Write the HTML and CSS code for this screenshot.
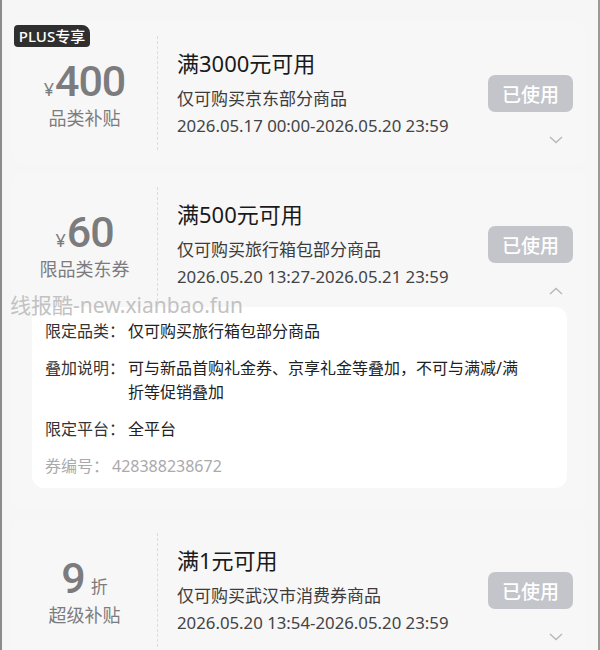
FILE: index.html
```html
<!DOCTYPE html>
<html>
<head>
    <meta name="viewport" content="width=device-width, initial-scale=1" />
    <title>优惠券</title>
    <link rel="stylesheet" href="styles.css">
</head>

<body>

<div class="page">

    <div class="card">
        <span class="plus-badge">PLUS专享</span>
        <div class="card-main">
            <div class="amount">
                <div class="value"><span class="unit">¥</span><span class="num">400</span></div>
                <div class="kind">品类补贴</div>
            </div>
            <div class="info">
                <div class="title">满3000元可用</div>
                <div class="scope">仅可购买京东部分商品</div>
                <div class="period">2026.05.17 00:00-2026.05.20 23:59</div>
            </div>
            <div class="side">
                <button class="used-button">已使用</button>
                <svg class="chevron" width="14" height="8" viewBox="0 0 14 8"><path d="M1 1l6 5.5L13 1" fill="none" stroke="#b8b8b8" stroke-width="1.4"/></svg>
            </div>
        </div>
    </div>

    <div class="card">
        <div class="card-main">
            <div class="amount">
                <div class="value"><span class="unit">¥</span><span class="num">60</span></div>
                <div class="kind">限品类东券</div>
            </div>
            <div class="info">
                <div class="title">满500元可用</div>
                <div class="scope">仅可购买旅行箱包部分商品</div>
                <div class="period">2026.05.20 13:27-2026.05.21 23:59</div>
            </div>
            <div class="side">
                <button class="used-button">已使用</button>
                <svg class="chevron" width="14" height="8" viewBox="0 0 14 8"><path d="M1 7l6-5.5L13 7" fill="none" stroke="#b8b8b8" stroke-width="1.4"/></svg>
            </div>
        </div>
        <div class="details">
            <div class="row"><span class="label">限定品类：</span><span class="text">仅可购买旅行箱包部分商品</span></div>
            <div class="row"><span class="label">叠加说明：</span><span class="text">可与新品首购礼金券、京享礼金等叠加，不可与满减/满折等促销叠加</span></div>
            <div class="row"><span class="label">限定平台：</span><span class="text">全平台</span></div>
            <div class="row muted"><span class="label">券编号：</span><span class="text">428388238672</span></div>
        </div>
        <div class="watermark">线报酷-new.xianbao.fun</div>
    </div>

    <div class="card">
        <div class="card-main">
            <div class="amount">
                <div class="value"><span class="num">9</span><span class="zhe">折</span></div>
                <div class="kind">超级补贴</div>
            </div>
            <div class="info">
                <div class="title">满1元可用</div>
                <div class="scope">仅可购买武汉市消费券商品</div>
                <div class="period">2026.05.20 13:54-2026.05.20 23:59</div>
            </div>
            <div class="side">
                <button class="used-button">已使用</button>
                <svg class="chevron" width="14" height="8" viewBox="0 0 14 8"><path d="M1 1l6 5.5L13 1" fill="none" stroke="#b8b8b8" stroke-width="1.4"/></svg>
            </div>
        </div>
    </div>

</div>

</body>
</html>
```

FILE: styles.css
```css
body {
    margin: 0;
    padding: 0;
    background-color: #f6f6f6;
    font-family: "Noto Sans", "Noto Sans CJK SC", sans-serif;
    color: #222222;
}

.page {
    box-sizing: border-box;
    width: 600px;
    height: 650px;
    overflow: hidden;
    border-left: 2px solid #8c8c8c;
    border-right: 2px solid #9a9a9a;
    padding: 22px 12px 0 10px;
}

.card {
    position: relative;
    background-color: #f7f7f7;
    border-radius: 10px;
    padding: 14px 0;
    margin-bottom: 9px;
}

.plus-badge {
    position: absolute;
    top: 3px;
    left: 2px;
    width: 76px;
    height: 22px;
    line-height: 22px;
    text-align: center;
    background-color: #2f2f2f;
    color: #ffffff;
    font-size: 15px;
    font-weight: 500;
    border-radius: 4px 8px 4px 4px;
}

.card-main {
    display: flex;
    height: 114px;
}

.amount {
    width: 145px;
    border-right: 1px dashed #dcdcdc;
    display: flex;
    flex-direction: column;
    align-items: center;
    justify-content: center;
    color: #7c7c7e;
}

.value {
    display: flex;
    align-items: baseline;
    height: 46px;
    margin-top: 2px;
}

.unit {
    font-size: 18px;
    margin-right: 1px;
}

.num {
    font-family: Roboto, "Noto Sans", sans-serif;
    font-size: 43px;
    font-weight: 500;
    letter-spacing: -1px;
    line-height: 46px;
}

.zhe {
    font-size: 17px;
    margin-left: 6px;
}

.kind {
    font-size: 18px;
    line-height: 26px;
    margin-top: 1px;
}

.info {
    flex: 1;
    padding: 12px 0 0 19px;
}

.title {
    font-size: 22px;
    line-height: 30px;
    color: #1a1a1a;
}

.scope {
    font-size: 17px;
    line-height: 30px;
    margin-top: 6px;
    color: #3c3c3c;
}

.period {
    font-size: 16.8px;
    line-height: 24px;
    color: #444444;
}

.side {
    width: 85px;
    margin-right: 13px;
    padding-top: 39px;
    display: flex;
    flex-direction: column;
    align-items: center;
}

.used-button {
    width: 85px;
    height: 37px;
    border: none;
    border-radius: 7px;
    background-color: #c3c5ca;
    color: #ffffff;
    font-family: "Noto Sans CJK SC", sans-serif;
    font-size: 19px;
    font-weight: 500;
    padding: 0;
}

.chevron {
    align-self: flex-end;
    margin: 24px 10px 0 0;
}

.details {
    margin: 6px 19px 8px 20px;
    background-color: #ffffff;
    border-radius: 12px;
    padding: 12px 13px 10px;
}

.row {
    display: flex;
    font-size: 16px;
    line-height: 24px;
    margin-bottom: 13px;
    color: #222222;
}

.row:last-child {
    margin-bottom: 0;
}

.label {
    flex: none;
    width: 83px;
    color: #333333;
}

.text {
    flex: 1;
    padding-right: 30px;
}

.row.muted .label,
.row.muted .text {
    color: #aaaaab;
}

.row.muted .label {
    width: 67px;
}

.watermark {
    position: absolute;
    left: -2px;
    top: 116px;
    font-size: 21px;
    color: #c2c2c2;
    white-space: nowrap;
}
```
